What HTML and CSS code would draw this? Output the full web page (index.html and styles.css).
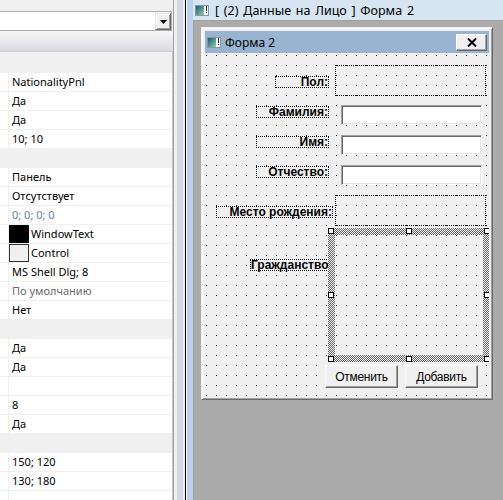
FILE: index.html
```html
<!DOCTYPE html>
<html>
<head>
<meta charset="utf-8">
<link rel="stylesheet" href="styles.css">
</head>
<body>
<div class="app">
  <aside class="props">
    <div class="props-top"></div>
    <div class="combo">
      <div class="combo-btn">
        <svg width="7" height="4" viewBox="0 0 7 4"><polygon points="0,0 7,0 3.5,4" fill="#000"/></svg>
      </div>
    </div>
    <div class="toolbar"></div>
    <div class="grid">
      <div class="cat first"></div>
      <div class="row"><div class="name"></div><div class="val">NationalityPnl</div></div>
      <div class="row"><div class="name"></div><div class="val">Да</div></div>
      <div class="row"><div class="name"></div><div class="val">Да</div></div>
      <div class="row"><div class="name"></div><div class="val">10; 10</div></div>
      <div class="cat"></div>
      <div class="row"><div class="name"></div><div class="val">Панель</div></div>
      <div class="row"><div class="name"></div><div class="val">Отсутствует</div></div>
      <div class="row"><div class="name"></div><div class="val blue">0; 0; 0; 0</div></div>
      <div class="row"><div class="name"></div><div class="val color"><span class="sw sw-black"></span>WindowText</div></div>
      <div class="row"><div class="name"></div><div class="val color"><span class="sw sw-light"></span>Control</div></div>
      <div class="row"><div class="name"></div><div class="val">MS Shell Dlg; 8</div></div>
      <div class="row"><div class="name"></div><div class="val gray">По умолчанию</div></div>
      <div class="row"><div class="name"></div><div class="val">Нет</div></div>
      <div class="cat"></div>
      <div class="row"><div class="name"></div><div class="val">Да</div></div>
      <div class="row"><div class="name"></div><div class="val">Да</div></div>
      <div class="row"><div class="name"></div><div class="val"></div></div>
      <div class="row"><div class="name"></div><div class="val">8</div></div>
      <div class="row"><div class="name"></div><div class="val">Да</div></div>
      <div class="cat"></div>
      <div class="row"><div class="name"></div><div class="val">150; 120</div></div>
      <div class="row"><div class="name"></div><div class="val">130; 180</div></div>
      <div class="row"><div class="name"></div><div class="val"></div></div>
    </div>
  </aside>
  <div class="splitter"></div>
  <section class="child">
    <div class="child-title">
      <svg class="ico" width="14" height="11" viewBox="0 0 14 11">
        <defs><linearGradient id="ga" x1="0" y1="0" x2="1" y2="1"><stop offset="0" stop-color="#1b5a78"/><stop offset="1" stop-color="#8ccfa6"/></linearGradient></defs>
        <rect x="0.5" y="0.5" width="13" height="10" fill="#fff" stroke="#8796a6"/>
        <rect x="1" y="1" width="8" height="9" fill="url(#ga)"/>
        <rect x="11" y="1" width="1" height="5" fill="#222"/>
        <rect x="11" y="7" width="1" height="1" fill="#222"/>
      </svg>
      <span class="child-caption">[ (2) Данные на Лицо ] Форма 2</span>
    </div>
    <div class="workspace">
      <div class="form">
        <div class="form-title">
          <svg class="ico" width="14" height="11" viewBox="0 0 14 11">
            <defs><linearGradient id="gb" x1="0" y1="0" x2="1" y2="1"><stop offset="0" stop-color="#1b5a78"/><stop offset="1" stop-color="#8ccfa6"/></linearGradient></defs>
            <rect x="0.5" y="0.5" width="13" height="10" fill="#fff" stroke="#8796a6"/>
            <rect x="1" y="1" width="8" height="9" fill="url(#gb)"/>
            <rect x="11" y="1" width="1" height="5" fill="#222"/>
            <rect x="11" y="7" width="1" height="1" fill="#222"/>
          </svg>
          <span class="form-caption">Форма 2</span>
          <div class="close">
            <svg width="10" height="9" viewBox="0 0 10 9"><path d="M1 0.5 L9 8.5 M9 0.5 L1 8.5" stroke="#000" stroke-width="2" fill="none"/></svg>
          </div>
        </div>
        <div class="client">
          <div class="pnl pnl-pol"></div>
          <div class="lbl lbl-pol">Пол:</div>
          <div class="lbl lbl-fam">Фамилия:</div>
          <div class="tb tb-fam"></div>
          <div class="lbl lbl-name">Имя:</div>
          <div class="tb tb-name"></div>
          <div class="lbl lbl-otch">Отчество:</div>
          <div class="tb tb-otch"></div>
          <div class="lbl lbl-mesto">Место рождения:</div>
          <div class="pnl pnl-mesto"></div>
          <div class="lbl lbl-grazh">Гражданство</div>
          <div class="sel"></div>
          <div class="h h-tl"></div>
          <div class="h h-tm"></div>
          <div class="h h-tr"></div>
          <div class="h h-ml"></div>
          <div class="h h-mr"></div>
          <div class="h h-bl"></div>
          <div class="h h-bm"></div>
          <div class="h h-br"></div>
          <div class="btn btn-cancel">Отменить</div>
          <div class="btn btn-add">Добавить</div>
        </div>
      </div>
    </div>
  </section>
</div>
</body>
</html>
```
FILE: styles.css
```css
html, body {
  margin: 0;
  padding: 0;
}
body {
  width: 503px;
  height: 500px;
  overflow: hidden;
  font-family: "Noto Sans", "Open Sans", sans-serif;
  font-size: 11px;
  color: #000;
}
.app {
  display: flex;
  height: 500px;
}

/* ---------- property panel ---------- */
.props {
  flex: none;
  width: 173px;
  border-right: 1px solid #a0a0a0;
  background: #f0f0f0;
  display: flex;
  flex-direction: column;
}
.props-top {
  height: 11px;
  flex: none;
}
.combo {
  flex: none;
  width: 171px;
  height: 18px;
  border: 1px solid #abadb3;
  border-left: none;
  background: #fff;
  display: flex;
  justify-content: flex-end;
}
.combo-btn {
  box-sizing: border-box;
  width: 16px;
  height: 17px;
  margin-top: 1px;
  background: #f0f0f0;
  border: 1px solid;
  border-color: #e3e3e3 #696969 #696969 #e3e3e3;
  box-shadow: inset 1px 1px #fff, inset -1px -1px #a0a0a0;
  display: flex;
  align-items: center;
  justify-content: center;
}
.combo-btn svg {
  display: block;
}
.toolbar {
  flex: none;
  height: 20px;
  background: linear-gradient(#f8f8fa, #d9dae0);
}
.grid {
  flex: 1;
  width: 172px;
  border-top: 1px solid #cfcfcf;
  border-right: 1px solid #c4c4c4;
  background: #fff;
  overflow: hidden;
}
.cat {
  height: 18px;
  background: #f0f0f0;
  border-bottom: 1px solid #f0f0f0;
}
.cat.first {
  height: 20px;
}
.row {
  display: flex;
  height: 18px;
  border-bottom: 1px solid #f0f0f0;
}
.name {
  flex: none;
  width: 8px;
  border-right: 1px solid #f0f0f0;
}
.val {
  flex: 1;
  padding-left: 3px;
  line-height: 18px;
  white-space: nowrap;
  display: flex;
  align-items: center;
}
.val.blue {
  color: #6682a8;
}
.val.gray {
  color: #6d6d6d;
}
.val.color {
  padding-left: 0;
}
.sw {
  flex: none;
  box-sizing: border-box;
  width: 20px;
  height: 18px;
  margin-right: 2px;
}
.sw-black {
  background: #000;
}
.sw-light {
  background: #f0f0f0;
  border: 1px solid #333;
}

/* ---------- splitter strip ---------- */
.splitter {
  flex: none;
  width: 13px;
  background: linear-gradient(to right,
    #f0f0f0 0 3px,
    #d3d8e0 3px 9px,
    #f0f0f0 9px 11px,
    #000 11px 12px,
    #fff 12px 13px);
}

/* ---------- MDI child ---------- */
.child {
  flex: 1;
  display: flex;
  flex-direction: column;
  border-left: 6px solid #b9d1ea;
  min-width: 0;
}
.child-title {
  flex: none;
  height: 20px;
  background: #d7e4f2;
  display: flex;
  align-items: center;
  padding-left: 2px;
  white-space: nowrap;
}
.ico {
  display: block;
  flex: none;
}
.child-caption {
  margin-left: 6px;
  font-size: 12.5px;
  word-spacing: 1.5px;
}
.workspace {
  flex: 1;
  background: #ababab;
  border-top: 1px solid #a0a0a0;
  border-left: 1px solid #a0a0a0;
  padding: 6px 0 0 7px;
}

/* ---------- designed form ---------- */
.form {
  box-sizing: border-box;
  width: 292px;
  height: 373px;
  padding: 3px;
  background: #f0f0f0;
  border: 1px solid;
  border-color: #f0f0f0 #696969 #696969 #f0f0f0;
  box-shadow: inset 1px 1px #fff, inset -1px -1px #a0a0a0;
  display: flex;
  flex-direction: column;
}
.form-title {
  flex: none;
  height: 22px;
  background: #99b4d1;
  display: flex;
  align-items: center;
  padding-left: 2px;
}
.form-caption {
  margin-left: 4px;
  font-size: 12px;
}
.close {
  box-sizing: border-box;
  margin-left: auto;
  margin-right: 2px;
  width: 31px;
  height: 17px;
  background: #f0f0f0;
  border: 1px solid;
  border-color: #fff #696969 #696969 #fff;
  box-shadow: inset -1px -1px #a0a0a0;
  display: flex;
  align-items: center;
  justify-content: center;
}
.close svg {
  display: block;
}
.client {
  flex: 1;
  position: relative;
  overflow: hidden;
  background: #f0f0f0;
  font-family: "Liberation Sans", Arial, sans-serif;
}
.client::before {
  content: "";
  position: absolute;
  inset: 0;
  background-image: linear-gradient(to right, #000 1px, transparent 1px);
  background-size: 10px 10px;
  background-position: 1px 0;
  -webkit-mask-image: linear-gradient(#000 1px, transparent 1px);
  -webkit-mask-size: 10px 10px;
  -webkit-mask-position: 0 2px;
  mask-image: linear-gradient(#000 1px, transparent 1px);
  mask-size: 10px 10px;
  mask-position: 0 2px;
}

/* design-surface controls (placed by their form coordinates) */
.lbl, .pnl, .tb, .btn, .sel, .h {
  position: absolute;
  box-sizing: border-box;
}
.lbl {
  height: 12px;
  border: 1px dotted #000;
  background: #f0f0f0;
  font-weight: bold;
  font-size: 12px;
  line-height: 10px;
  text-align: right;
  white-space: nowrap;
}
.lbl-pol   { left: 70px; top: 23px;  width: 54px; }
.lbl-fam   { left: 51px; top: 53px;  width: 73px; }
.lbl-name  { left: 51px; top: 83px;  width: 73px; }
.lbl-otch  { left: 51px; top: 113px; width: 73px; }
.lbl-mesto { left: 11px; top: 153px; width: 117px; }
.lbl-grazh { left: 45px; top: 206px; width: 79px; text-align: left; }

.pnl {
  border: 1px dotted #000;
}
.pnl-pol   { left: 130px; top: 12px;  width: 151px; height: 31px; }
.pnl-mesto { left: 130px; top: 142px; width: 151px; height: 31px; }

.tb {
  left: 136px;
  width: 141px;
  height: 20px;
  background: #fff;
  border: 1px solid;
  border-color: #a0a0a0 #fff #fff #a0a0a0;
  box-shadow: inset 1px 1px #696969, inset -1px -1px #e3e3e3;
}
.tb-fam  { top: 52px; }
.tb-name { top: 82px; }
.tb-otch { top: 112px; }

.sel {
  left: 123px;
  top: 175px;
  width: 162px;
  height: 134px;
  padding: 7px;
  background: repeating-conic-gradient(#6a6a6a 0 25%, #f0f0f0 0 50%) 0 0 / 2px 2px;
  -webkit-mask: linear-gradient(#000 0 0) content-box, linear-gradient(#000 0 0);
  -webkit-mask-composite: xor;
  mask: linear-gradient(#000 0 0) content-box exclude, linear-gradient(#000 0 0);
}
.h {
  width: 6px;
  height: 6px;
  border: 1px solid #000;
  background: #fff;
}
.h-tl { left: 123px; top: 175px; }
.h-tm { left: 201px; top: 175px; }
.h-tr { left: 279px; top: 175px; }
.h-ml { left: 123px; top: 239px; }
.h-mr { left: 279px; top: 239px; }
.h-bl { left: 123px; top: 303px; }
.h-bm { left: 201px; top: 303px; }
.h-br { left: 279px; top: 303px; }

.btn {
  top: 312px;
  width: 73px;
  height: 23px;
  background: #f0f0f0;
  border: 1px solid;
  border-color: #fff #696969 #696969 #fff;
  box-shadow: inset -1px -1px #a0a0a0;
  font-size: 12px;
  letter-spacing: -0.3px;
  display: flex;
  align-items: center;
  justify-content: center;
}
.btn-cancel { left: 120px; }
.btn-add    { left: 200px; }
```
